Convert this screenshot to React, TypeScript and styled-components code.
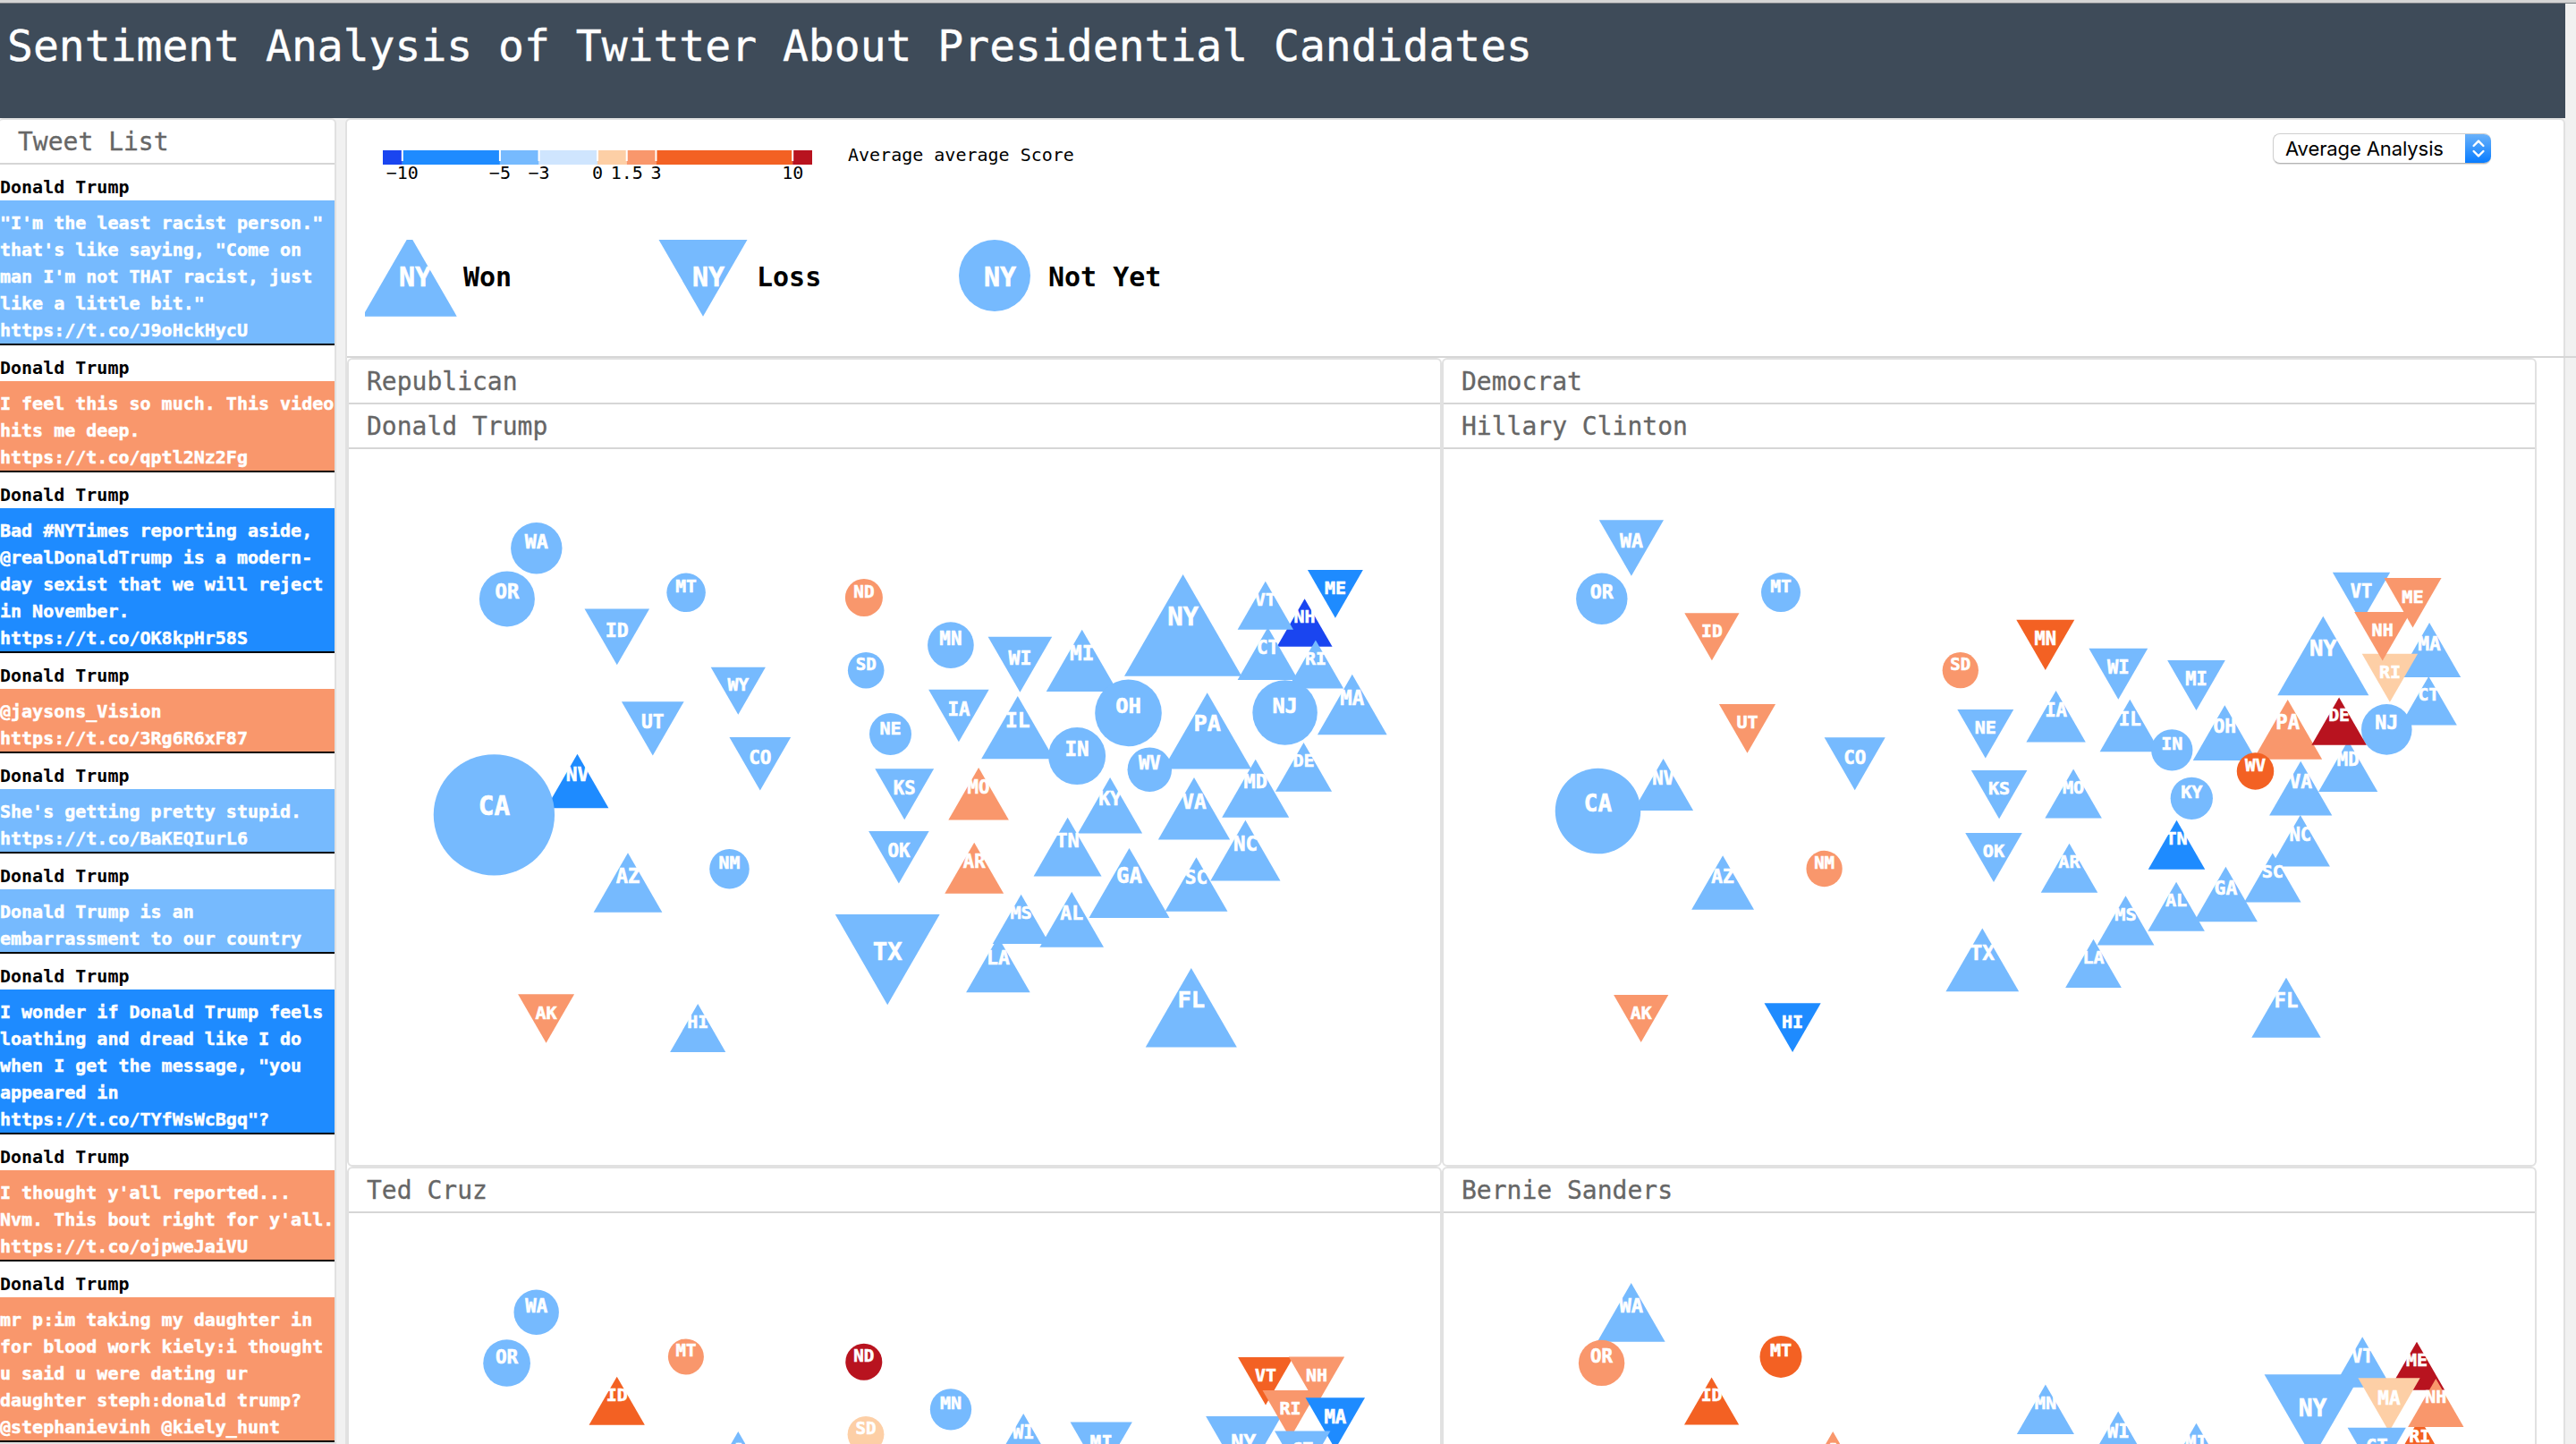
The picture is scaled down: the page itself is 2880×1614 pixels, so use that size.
import React from 'react';
import styled, { createGlobalStyle } from 'styled-components';

const palette = {
  indigo: '#1a45f0',
  blue: '#1e8bff',
  sky: '#76bafe',
  pale: '#cfe5fe',
  peach: '#fdcfa6',
  salmon: '#f9976c',
  orange: '#f36123',
  red: '#b8131f',
};
type Tone = keyof typeof palette;

const GlobalStyle = createGlobalStyle`
  * { box-sizing: border-box; }
  html, body { margin: 0; height: 1614px; overflow: hidden; background: #f1f1f1; }
  body { font-family: Menlo, 'DejaVu Sans Mono', monospace; color: #000; }
`;

const Page = styled.div`
  display: flex;
  flex-direction: column;
  width: 2880px;
  height: 1614px;
  overflow: hidden;
`;

const WindowEdge = styled.div`
  flex: none;
  height: 4px;
  background: #d5d5d5;
  border-bottom: 1px solid #7c8085;
`;

const Header = styled.header`
  flex: none;
  width: 2868px;
  height: 128px;
  padding: 19px 0 0 8px;
  background: #3e4b59;
`;

const Title = styled.h1`
  margin: 0;
  font-size: 48px;
  line-height: 56px;
  font-weight: 400;
  color: #fff;
  white-space: nowrap;
  -webkit-text-stroke: 0.4px #fff;
`;

const Columns = styled.div`
  display: flex;
  gap: 10px;
  flex: 1;
  min-height: 0;
`;

const Sidebar = styled.aside`
  flex: none;
  width: 376px;
  background: #fff;
  border: 2px solid #e1e1e1;
  border-left: 0;
  border-radius: 4px 6px 0 0;
`;

const PanelTitle = styled.h2`
  margin: 0;
  height: 50px;
  padding: 1px 0 0 20px;
  border-bottom: 2px solid #d6d6d6;
  font-size: 28px;
  line-height: 48px;
  font-weight: 400;
  color: #666;
  -webkit-text-stroke: 0.3px #666;
`;

const Author = styled.div`
  height: 40px;
  padding-top: 10px;
  font-size: 20px;
  line-height: 30px;
  font-weight: 700;
`;

const TweetBody = styled.div<{ $tone: Tone }>`
  padding-top: 10px;
  border-bottom: 2px solid #000;
  background: ${(p) => palette[p.$tone]};
  color: #fff;
  font-size: 20px;
  line-height: 30px;
  font-weight: 700;
  white-space: pre;
  -webkit-text-stroke: 0.5px #fff;
`;

const Main = styled.main`
  flex: none;
  width: 2482px;
  background: #fff;
  border: 2px solid #e1e1e1;
  border-bottom: 0;
  border-radius: 6px 6px 0 0;
`;

const LegendArea = styled.section`
  display: grid;
  grid-template-columns: 2153px 244px;
  align-items: start;
  width: 2492px;
  height: 266px;
  border-bottom: 2px solid #d6d6d6;
`;

const Select = styled.button`
  display: flex;
  align-items: stretch;
  justify-content: space-between;
  height: 34px;
  margin-top: 15px;
  padding: 0;
  overflow: hidden;
  border: 1px solid #cfcfcf;
  border-bottom-color: #b4b4b4;
  border-right: 0;
  border-radius: 8px;
  background: #fff;
  box-shadow: 0 1px 1px rgba(0, 0, 0, 0.12);
`;

const SelectText = styled.span`
  padding-left: 13px;
  font-family: Inter, 'Liberation Sans', sans-serif;
  font-size: 22px;
  line-height: 33px;
  letter-spacing: -0.1px;
  color: #000;
`;

const SelectArrows = styled.span`
  display: flex;
  align-items: center;
  justify-content: center;
  width: 29px;
  margin: -1px 0;
  background: linear-gradient(#6cb3fa, #057aff);
`;

const Grid = styled.section`
  display: grid;
  grid-template-columns: 1224px 1224px;
  grid-template-rows: 904px 854px;
`;

const Cell = styled.article`
  border: 2px solid #e1e1e1;
  border-radius: 6px;
  overflow: hidden;
`;

const Canvas = styled.svg`
  display: block;
`;

const Label = styled.text`
  font-family: Menlo, 'DejaVu Sans Mono', monospace;
  font-weight: 700;
  fill: #fff;
  stroke: #fff;
  stroke-width: 0.6px;
`;

const LegendText = styled.text<{ $size: number; $bold?: boolean }>`
  font-family: Menlo, 'DejaVu Sans Mono', monospace;
  font-size: ${(p) => p.$size}px;
  font-weight: ${(p) => (p.$bold ? 700 : 400)};
  fill: #000;
`;

type Shape = 'up' | 'down' | 'dot';
// [state, shape, x, y, height, tone]
type Mark = [string, Shape, number, number, number, Tone?];

const trump: Mark[] = [
  ['WA', 'dot', 209.8, 110.8, 57.4],
  ['OR', 'dot', 176.9, 167.4, 62],
  ['MT', 'dot', 377.1, 160.3, 43.5],
  ['ID', 'down', 299.8, 209.9, 62.8],
  ['ND', 'dot', 575.9, 166, 42, 'salmon'],
  ['MN', 'dot', 672.9, 219.1, 51.7],
  ['SD', 'dot', 578.2, 247.2, 40.6],
  ['NE', 'dot', 605.5, 318.5, 47],
  ['WY', 'down', 435.3, 270.3, 53],
  ['UT', 'down', 339.8, 312.4, 60.4],
  ['CO', 'down', 459.8, 351.8, 59.5],
  ['NV', 'up', 255.5, 371, 60.5, 'blue'],
  ['CA', 'dot', 162.4, 408.8, 135.3],
  ['AZ', 'up', 312, 484.6, 66.5],
  ['NM', 'dot', 425.5, 469.2, 44.5],
  ['KS', 'down', 621.2, 385.7, 57],
  ['OK', 'down', 614.9, 456.2, 58.5],
  ['TX', 'down', 602.2, 570.7, 101.2],
  ['AK', 'down', 220.6, 636.5, 54.5, 'salmon'],
  ['HI', 'up', 390.2, 647, 53.8],
  ['WI', 'down', 750.4, 240.7, 62],
  ['IA', 'down', 681.9, 297.9, 58.5],
  ['MI', 'up', 819.7, 236.3, 69.2],
  ['IL', 'up', 747.8, 311.1, 70.4],
  ['OH', 'dot', 871.5, 294.9, 74.6],
  ['IN', 'dot', 814.1, 343.1, 64],
  ['NY', 'up', 932.6, 196.9, 113.6],
  ['PA', 'up', 959.7, 314.8, 85.3],
  ['WV', 'dot', 895.3, 358.2, 49.5],
  ['NH', 'up', 1068.6, 194, 53.6, 'indigo'],
  ['VT', 'up', 1024.8, 174.7, 54],
  ['ME', 'down', 1102.9, 161.9, 53.6, 'blue'],
  ['CT', 'up', 1027.5, 228.6, 58.7],
  ['RI', 'up', 1080.9, 240.5, 54],
  ['NJ', 'dot', 1046.6, 294.5, 72.5],
  ['MA', 'up', 1121.8, 285.5, 67.3],
  ['DE', 'up', 1067.5, 355.3, 54.7],
  ['MD', 'up', 1013.7, 379.3, 65],
  ['VA', 'up', 945, 401.8, 69.6],
  ['KY', 'up', 851.1, 398.2, 62.4],
  ['MO', 'up', 704.1, 385.2, 58.5, 'salmon'],
  ['TN', 'up', 803.6, 444.7, 65.8],
  ['NC', 'up', 1002.4, 448.7, 67.7],
  ['SC', 'up', 947.5, 486.4, 60.5],
  ['GA', 'up', 872.5, 484.9, 78],
  ['AR', 'up', 699.2, 468.2, 57, 'salmon'],
  ['MS', 'up', 751.6, 525.4, 55.1],
  ['AL', 'up', 808.2, 525.8, 62],
  ['LA', 'up', 725.9, 576.3, 62],
  ['FL', 'up', 941.8, 624.3, 88.4],
];

const clinton: Mark[] = [
  ['WA', 'down', 209.9, 110.4, 62.5],
  ['OR', 'dot', 176.8, 167.2, 57.4],
  ['MT', 'dot', 377, 160.1, 44],
  ['ID', 'down', 299.9, 209.7, 53, 'salmon'],
  ['SD', 'dot', 577.8, 247.2, 40.3, 'salmon'],
  ['MN', 'down', 672.8, 218.9, 56.3, 'orange'],
  ['NE', 'down', 605.8, 318.2, 54.5],
  ['UT', 'down', 339.5, 312.4, 54.7, 'salmon'],
  ['CO', 'down', 459.7, 351.8, 59],
  ['NV', 'up', 245.6, 375.1, 58],
  ['CA', 'dot', 172.5, 404.6, 95.5],
  ['AZ', 'up', 312.1, 484.6, 60.5],
  ['NM', 'dot', 425.6, 469, 40.3, 'salmon'],
  ['KS', 'down', 621.1, 386.1, 54.2],
  ['OK', 'down', 615, 456.4, 55],
  ['TX', 'up', 602.3, 570.9, 70.8],
  ['AK', 'down', 220.7, 636.5, 53, 'salmon'],
  ['HI', 'down', 390.1, 646.6, 54.7, 'blue'],
  ['IA', 'up', 684.6, 298.7, 57.5],
  ['WI', 'down', 754.3, 251.3, 57],
  ['MI', 'down', 841.5, 264.1, 56],
  ['IL', 'up', 767.3, 309, 58.3],
  ['IN', 'dot', 814.3, 336.4, 46.3],
  ['OH', 'up', 873.3, 317.1, 61.6],
  ['NY', 'up', 983.3, 231, 88.4],
  ['PA', 'up', 943.7, 313.4, 66.6, 'salmon'],
  ['MD', 'up', 1011.2, 354.4, 57.3],
  ['NJ', 'dot', 1054.3, 313.4, 56.6],
  ['DE', 'up', 1001.1, 304.1, 53.2, 'red'],
  ['WV', 'dot', 907.5, 359.9, 41.5, 'orange'],
  ['KY', 'dot', 836.3, 390.3, 47.3],
  ['VA', 'up', 958.2, 379.1, 60.8],
  ['VT', 'down', 1026, 165.7, 55.7],
  ['ME', 'down', 1083.5, 171.7, 55.5, 'salmon'],
  ['MA', 'up', 1102.1, 224.5, 60.8],
  ['RI', 'down', 1057.9, 255.8, 54, 'peach'],
  ['NH', 'down', 1049.7, 209.2, 54.6, 'salmon'],
  ['CT', 'up', 1101.3, 281.2, 54.6],
  ['NC', 'up', 957.8, 437.8, 57.4],
  ['SC', 'up', 926.8, 479.1, 55],
  ['GA', 'up', 874.4, 497.5, 61.5],
  ['AL', 'up', 819.1, 511.3, 55],
  ['MS', 'up', 762.5, 526.8, 55.3],
  ['LA', 'up', 726.5, 574.8, 54.3],
  ['TN', 'up', 819.5, 442.2, 55, 'blue'],
  ['AR', 'up', 699.5, 468.2, 55],
  ['MO', 'up', 704.1, 385, 55],
  ['FL', 'up', 942, 624.3, 67],
];

const cruz: Mark[] = [
  ['WA', 'dot', 209.7, 110.7, 50.4],
  ['OR', 'dot', 176.6, 167.5, 52.7],
  ['MT', 'dot', 376.9, 160.4, 40, 'salmon'],
  ['ND', 'dot', 575.8, 166.2, 41, 'red'],
  ['ID', 'up', 299.7, 209.8, 54, 'orange'],
  ['MN', 'dot', 673, 219.3, 46.3],
  ['SD', 'dot', 578, 247.3, 40.8, 'peach'],
  ['WY', 'up', 435.3, 270.5, 53],
  ['WI', 'up', 754.2, 252, 56],
  ['MI', 'down', 841.2, 263.5, 60],
  ['NY', 'down', 1000.3, 263.5, 73],
  ['VT', 'down', 1025, 187.8, 53.5, 'orange'],
  ['NH', 'down', 1082, 187.5, 54, 'salmon'],
  ['RI', 'down', 1052.4, 224.8, 53.5, 'salmon'],
  ['MA', 'down', 1102.8, 235, 57.6, 'blue'],
  ['CT', 'down', 1066.2, 270.4, 54],
];

const sanders: Mark[] = [
  ['WA', 'up', 209.7, 110.8, 65.7],
  ['OR', 'dot', 176.6, 167.4, 51.4, 'salmon'],
  ['MT', 'dot', 377, 160.4, 47, 'orange'],
  ['ID', 'up', 299.6, 210, 53, 'orange'],
  ['MN', 'up', 672.9, 219.2, 55.5],
  ['WY', 'up', 435.2, 270.5, 53, 'salmon'],
  ['WI', 'up', 754.2, 251.2, 59.5],
  ['MI', 'up', 841.5, 264.2, 59],
  ['VT', 'up', 1027.2, 166.5, 56.3],
  ['NY', 'down', 971.5, 227, 93.4],
  ['ME', 'up', 1088, 170.7, 54, 'red'],
  ['MA', 'down', 1057, 214.3, 60, 'peach'],
  ['RI', 'up', 1091.3, 256, 54, 'orange'],
  ['NH', 'up', 1109.3, 212, 54, 'salmon'],
  ['CT', 'down', 1043.2, 268, 56.5],
];

const tweets: { tone: Tone; text: string }[] = [
  { tone: 'sky', text: '"I\'m the least racist person."\nthat\'s like saying, "Come on\nman I\'m not THAT racist, just\nlike a little bit."\nhttps://t.co/J9oHckHycU' },
  { tone: 'salmon', text: 'I feel this so much. This video\nhits me deep.\nhttps://t.co/qptl2Nz2Fg' },
  { tone: 'blue', text: 'Bad #NYTimes reporting aside,\n@realDonaldTrump is a modern-\nday sexist that we will reject\nin November.\nhttps://t.co/OK8kpHr58S' },
  { tone: 'salmon', text: '@jaysons_Vision\nhttps://t.co/3Rg6R6xF87' },
  { tone: 'sky', text: "She's getting pretty stupid.\nhttps://t.co/BaKEQIurL6" },
  { tone: 'sky', text: 'Donald Trump is an\nembarrassment to our country' },
  { tone: 'blue', text: 'I wonder if Donald Trump feels\nloathing and dread like I do\nwhen I get the message, "you\nappeared in\nhttps://t.co/TYfWsWcBgq"?' },
  { tone: 'salmon', text: "I thought y'all reported...\nNvm. This bout right for y'all.\nhttps://t.co/ojpweJaiVU" },
  { tone: 'salmon', text: 'mr p:im taking my daughter in\nfor blood work kiely:i thought\nu said u were dating ur\ndaughter steph:donald trump?\n@stephanievinh @kiely_hunt' },
];

const Symbol = ({ shape, x, y, size, fill }: { shape: Shape; x: number; y: number; size: number; fill: string }) => {
  if (shape === 'dot') return <circle cx={x} cy={y} r={size / 2} fill={fill} />;
  const ry = size / 2;
  const rx = size / Math.sqrt(3);
  const tip = shape === 'up' ? -ry : ry;
  return <polygon points={`${x},${y + tip} ${x + rx},${y - tip} ${x - rx},${y - tip}`} fill={fill} />;
};

const labelSize = (shape: Shape, size: number) =>
  shape === 'dot' ? 19.5 * Math.pow(size / 43, 0.36) : 2.72 * Math.sqrt(size);

const Cartogram = ({ marks }: { marks: Mark[] }) => (
  <Canvas width={1220} height={800}>
    {marks.map(([name, shape, x, y, size, tone = 'sky']) => (
      <g key={name}>
        <Symbol shape={shape} x={x} y={y} size={size} fill={palette[tone]} />
        <Label x={x} y={y} textAnchor="middle" fontSize={labelSize(shape, size)}>
          {name}
        </Label>
      </g>
    ))}
  </Canvas>
);

const bands: [number, number, Tone][] = [
  [-11, -10, 'indigo'],
  [-10, -5, 'blue'],
  [-5, -3, 'sky'],
  [-3, 0, 'pale'],
  [0, 1.5, 'peach'],
  [1.5, 3, 'salmon'],
  [3, 10, 'orange'],
  [10, 11, 'red'],
];
const scale = (v: number) => 40 + ((v + 11) * 480) / 22;

const outcomes: [Shape, string, number][] = [
  ['up', 'Won', 50],
  ['down', 'Loss', 378],
  ['dot', 'Not Yet', 704],
];

const Legend = () => (
  <Canvas width={2153} height={264}>
    {bands.map(([a, b, tone]) => (
      <rect key={a} x={scale(a)} y={34} width={scale(b) - scale(a)} height={16} fill={palette[tone]} />
    ))}
    {bands.slice(1).map(([v]) => (
      <g key={v}>
        <rect x={scale(v) - 1} y={34} width={2} height={12} fill="#fff" />
        <LegendText $size={20} x={scale(v)} y={66} textAnchor="middle">
          {String(v).replace('-', '\u2212')}
        </LegendText>
      </g>
    ))}
    <LegendText $size={20} x={560} y={46}>
      Average average Score
    </LegendText>
    <svg x={20} y={134} width={1100} height={100}>
      {outcomes.map(([shape, label, x]) => (
        <g key={label}>
          <Symbol shape={shape} x={x} y={40} size={shape === 'dot' ? 80 : 91.4} fill={palette.sky} />
          <Label x={x - 12} y={52} fontSize={30}>
            NY
          </Label>
          <LegendText $size={30} $bold x={x + 60} y={52}>
            {label}
          </LegendText>
        </g>
      ))}
    </svg>
  </Canvas>
);

export default function App() {
  return (
    <Page>
      <GlobalStyle />
      <WindowEdge />
      <Header>
        <Title>Sentiment Analysis of Twitter About Presidential Candidates</Title>
      </Header>
      <Columns>
        <Sidebar>
          <PanelTitle>Tweet List</PanelTitle>
          {tweets.map((t) => (
            <div key={t.text}>
              <Author>Donald Trump</Author>
              <TweetBody $tone={t.tone}>{t.text}</TweetBody>
            </div>
          ))}
        </Sidebar>
        <Main>
          <LegendArea>
            <Legend />
            <Select>
              <SelectText>Average Analysis</SelectText>
              <SelectArrows>
                <svg width="16" height="22" viewBox="0 0 16 22" fill="none" stroke="#fff" strokeWidth="2.4" strokeLinecap="round" strokeLinejoin="round">
                  <path d="M2.6 8 L8 2.6 L13.4 8 M2.6 14 L8 19.4 L13.4 14" />
                </svg>
              </SelectArrows>
            </Select>
          </LegendArea>
          <Grid>
            <Cell>
              <PanelTitle>Republican</PanelTitle>
              <PanelTitle>Donald Trump</PanelTitle>
              <Cartogram marks={trump} />
            </Cell>
            <Cell>
              <PanelTitle>Democrat</PanelTitle>
              <PanelTitle>Hillary Clinton</PanelTitle>
              <Cartogram marks={clinton} />
            </Cell>
            <Cell>
              <PanelTitle>Ted Cruz</PanelTitle>
              <Cartogram marks={cruz} />
            </Cell>
            <Cell>
              <PanelTitle>Bernie Sanders</PanelTitle>
              <Cartogram marks={sanders} />
            </Cell>
          </Grid>
        </Main>
      </Columns>
    </Page>
  );
}
